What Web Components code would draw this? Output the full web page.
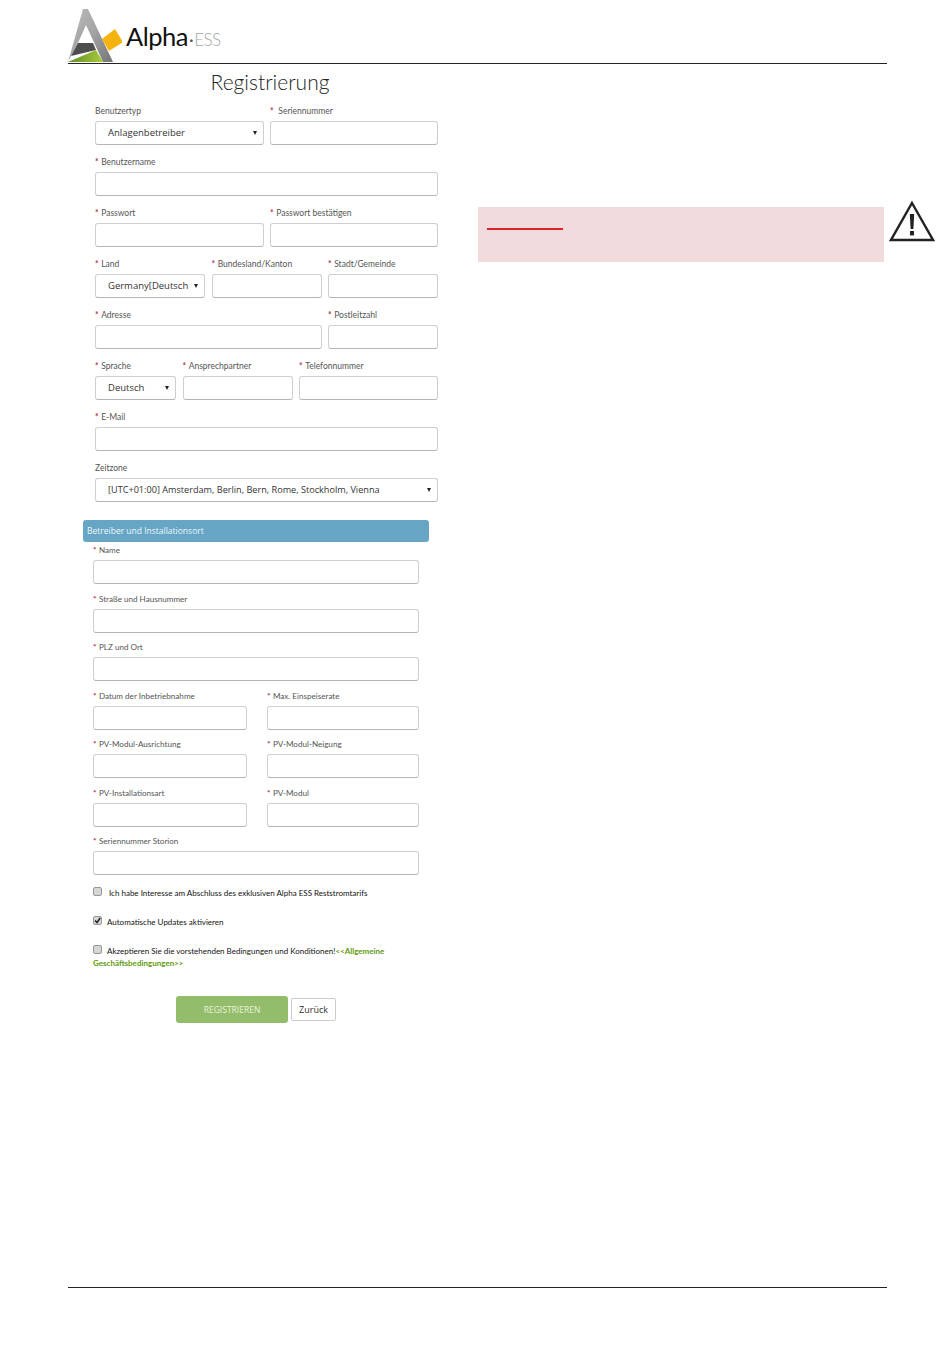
<!DOCTYPE html>
<html lang="de">
<head>
<meta charset="utf-8">
<title>Registrierung</title>
<style>
    body {
        margin: 0;
        background: #fff;
        font-family: "Open Sans", "Liberation Sans", sans-serif;
    }
</style>
</head>
<body>
<reg-page>
    <reg-header slot="header"></reg-header>
    <form-column slot="form"></form-column>
    <warn-box slot="aside"></warn-box>
</reg-page>

<script>
const pageTemplate = document.createElement('template');
pageTemplate.innerHTML = `
    <style>
        :host {
            display: flex;
            flex-flow: column nowrap;
            width: 950px;
            height: 1369px;
            padding: 8px 63px 0 68px;
            box-sizing: border-box;
        }
        .body {
            display: flex;
            flex: none;
            height: 1223px;
        }
        .foot {
            border-top: 1px solid #222;
        }
    </style>
    <slot name="header"></slot>
    <div class="body">
        <slot name="form"></slot>
        <slot name="aside"></slot>
    </div>
    <div class="foot"></div>
`;

class RegPage extends HTMLElement {
    constructor() {
        super();
        this.attachShadow({ mode: 'open' }).appendChild(pageTemplate.content.cloneNode(true));
    }
}

const headerTemplate = document.createElement('template');
headerTemplate.innerHTML = `
    <style>
        :host {
            display: flex;
            align-items: flex-end;
            height: 55px;
            border-bottom: 1px solid #222;
            box-sizing: content-box;
        }
        svg {
            display: block;
        }
        .name {
            font: 400 25.5px/1 Lato, "Open Sans", sans-serif;
            color: #111;
            margin: 0 0 14px 4px;
            letter-spacing: -0.5px;
        }
        .dot {
            color: #555;
            font-size: 18px;
            margin: 0 1px;
        }
        .ess {
            color: #a3a7a8;
            font-size: 17px;
            letter-spacing: -0.6px;
            font-weight: 300;
        }
    </style>
    <svg width="54" height="55" viewBox="0 0 54 55">
        <defs>
            <linearGradient id="arm" x1="0" y1="0" x2="1" y2="1">
                <stop offset="0" stop-color="#bcbcbc"/>
                <stop offset="0.5" stop-color="#a4a4a4"/>
                <stop offset="1" stop-color="#747474"/>
            </linearGradient>
            <linearGradient id="leaf" x1="0" y1="0" x2="1" y2="0">
                <stop offset="0" stop-color="#5f8a2a"/>
                <stop offset="1" stop-color="#a9cb3a"/>
            </linearGradient>
        </defs>
        <path d="M0 54 L15 1 L20 1 L45 54 L35 54 L18 17 L10 35 L3 48 Z" fill="url(#arm)"/>
        <path d="M3 48 L10 35 L25 35 L28 42 Z" fill="#4e4d50"/>
        <path d="M0 54 L28 42 L35 54 Z" fill="url(#leaf)"/>
        <path d="M34 31 L47 21 L55 34 L41 43 Z" fill="#f4b30e"/>
    </svg>
    <span class="name">Alpha<span class="dot">&middot;</span><span class="ess">ESS</span></span>
`;

class RegHeader extends HTMLElement {
    constructor() {
        super();
        this.attachShadow({ mode: 'open' }).appendChild(headerTemplate.content.cloneNode(true));
    }
}

const fieldTemplate = document.createElement('template');
fieldTemplate.innerHTML = `
    <style>
        :host {
            display: block;
            min-width: 0;
        }
        .label {
            display: block;
            height: 15px;
            font-family: Lato, "Open Sans", sans-serif;
            font-size: var(--label-size, 8.5px);
            line-height: 10px;
            color: #555;
            white-space: nowrap;
        }
        .star {
            color: #b4304e;
            font-weight: 700;
            margin-right: 0.5px;
        }
        .control {
            display: flex;
            align-items: center;
            height: 24px;
            box-sizing: border-box;
            border: 1px solid #cfcfcf;
            border-bottom-color: #b5b5b5;
            border-radius: 3px;
            background: #fff;
            padding: 0 6px 1px 12px;
            font-size: var(--value-size, 9.5px);
            color: #333;
            overflow: hidden;
            white-space: nowrap;
        }
        .value {
            flex: auto;
            min-width: 0;
        }
        .arrow {
            flex: none;
            margin-left: 4px;
            width: 0;
            height: 0;
            border: 2.5px solid transparent;
            border-top: 4px solid #222;
            border-bottom: 0;
        }
    </style>
    <span class="label"></span>
    <div class="control"><span class="value"></span></div>
`;

class RegField extends HTMLElement {
    constructor() {
        super();
        this.attachShadow({ mode: 'open' }).appendChild(fieldTemplate.content.cloneNode(true));
    }

    connectedCallback() {
        const root = this.shadowRoot;
        const label = root.querySelector('.label');
        label.textContent = '';
        if (this.hasAttribute('required')) {
            const star = document.createElement('span');
            star.className = 'star';
            star.textContent = '* ';
            label.appendChild(star);
        }
        label.append(this.getAttribute('label') || '');
        root.querySelector('.value').textContent = this.getAttribute('value') || '';

        // Selects carry the little arrow on the right
        if (this.hasAttribute('select') && !root.querySelector('.arrow')) {
            const arrow = document.createElement('span');
            arrow.className = 'arrow';
            root.querySelector('.control').appendChild(arrow);
        }
    }
}

const rowTemplate = document.createElement('template');
rowTemplate.innerHTML = `
    <style>
        :host {
            display: grid;
            grid-template-columns: var(--cols, 1fr);
            column-gap: var(--gap, 6px);
            margin-bottom: var(--row-space, 12px);
        }
    </style>
    <slot></slot>
`;

class RegRow extends HTMLElement {
    constructor() {
        super();
        this.attachShadow({ mode: 'open' }).appendChild(rowTemplate.content.cloneNode(true));
    }

    connectedCallback() {
        if (this.hasAttribute('cols')) {
            this.style.setProperty('--cols', this.getAttribute('cols'));
        }
    }
}

const checkTemplate = document.createElement('template');
checkTemplate.innerHTML = `
    <style>
        :host {
            display: block;
            font-family: Lato, "Open Sans", sans-serif;
            font-size: 8px;
            line-height: 12px;
            color: #111;
            margin-bottom: var(--check-space, 17px);
        }
        .box {
            display: inline-block;
            width: 9px;
            height: 9px;
            box-sizing: border-box;
            border: 1px solid #999;
            border-radius: 2px;
            background: #d6d6d6;
            margin-right: var(--check-text, 5px);
            position: relative;
            top: -2px;
            vertical-align: middle;
        }
        svg {
            display: none;
            width: 7px;
            height: 7px;
        }
        :host([checked]) svg {
            display: block;
        }
        ::slotted(a) {
            color: #5f9a10;
            font-weight: 700;
            text-decoration: none;
        }
    </style>
    <span class="box"><svg viewBox="0 0 7 7"><path d="M1 3.5 L3 5.5 L6.2 1" fill="none" stroke="#222" stroke-width="1.5"/></svg></span><slot></slot>
`;

class RegCheck extends HTMLElement {
    constructor() {
        super();
        this.attachShadow({ mode: 'open' }).appendChild(checkTemplate.content.cloneNode(true));
    }
}

const columnTemplate = document.createElement('template');
columnTemplate.innerHTML = `
    <style>
        :host {
            display: block;
            width: 410px;
            flex: none;
        }
        h1 {
            margin: 5px 0 0;
            height: 25px;
            text-align: center;
            padding-right: 6px;
            font: 300 21px/25px Lato, "Open Sans", sans-serif;
            color: #222;
        }
        .top {
            padding: 12px 40px 0 27px;
            width: 343px;
        }
        .bar {
            margin: 18px 0 0 15px;
            width: 346px;
            height: 22px;
            box-sizing: border-box;
            background: #66a5c4;
            border-radius: 3px;
            color: #eef6fa;
            font-size: 8.5px;
            line-height: 22px;
            padding-left: 4px;
        }
        .lower {
            padding: 3px 0 0 25px;
            width: 326px;
            --row-space: 9.5px;
            --gap: 20px;
            --label-size: 8.1px;
        }
        .checks {
            padding: 2px 0 0 25px;
            width: 326px;
        }
        .actions {
            display: flex;
            align-items: center;
            gap: 3px;
            margin: 27px 0 0 108px;
        }
        .primary {
            width: 112px;
            height: 27px;
            background: #94bd6b;
            border-radius: 3px;
            color: #e8f2dc;
            font-size: 8.5px;
            line-height: 27px;
            text-align: center;
        }
        .back {
            width: 45px;
            height: 23px;
            box-sizing: border-box;
            border: 1px solid #ccc;
            border-radius: 2px;
            color: #333;
            font-size: 9px;
            line-height: 21px;
            text-align: center;
        }
    </style>
    <h1>Registrierung</h1>
    <div class="top">
        <reg-row cols="169px 168px">
            <reg-field label="Benutzertyp" select value="Anlagenbetreiber"></reg-field>
            <reg-field label="&nbsp;Seriennummer" required></reg-field>
        </reg-row>
        <reg-row>
            <reg-field label="Benutzername" required></reg-field>
        </reg-row>
        <reg-row cols="169px 168px">
            <reg-field label="Passwort" required></reg-field>
            <reg-field label="Passwort bestätigen" required></reg-field>
        </reg-row>
        <reg-row cols="110px 110px 110px" style="--gap: 6.5px">
            <reg-field label="Land" required select value="Germany[Deutsch"></reg-field>
            <reg-field label="Bundesland/Kanton" required></reg-field>
            <reg-field label="Stadt/Gemeinde" required></reg-field>
        </reg-row>
        <reg-row cols="227px 110px">
            <reg-field label="Adresse" required></reg-field>
            <reg-field label="Postleitzahl" required></reg-field>
        </reg-row>
        <reg-row cols="81px 110px 139px" style="--gap: 6.5px">
            <reg-field label="Sprache" required select value="Deutsch"></reg-field>
            <reg-field label="Ansprechpartner" required></reg-field>
            <reg-field label="Telefonnummer" required></reg-field>
        </reg-row>
        <reg-row>
            <reg-field label="E-Mail" required></reg-field>
        </reg-row>
        <reg-row style="--value-size: 9.15px">
            <reg-field label="Zeitzone" select value="[UTC+01:00] Amsterdam, Berlin, Bern, Rome, Stockholm, Vienna"></reg-field>
        </reg-row>
    </div>
    <div class="bar">Betreiber und Installationsort</div>
    <div class="lower">
        <reg-row>
            <reg-field label="Name" required></reg-field>
        </reg-row>
        <reg-row>
            <reg-field label="Straße und Hausnummer" required></reg-field>
        </reg-row>
        <reg-row>
            <reg-field label="PLZ und Ort" required></reg-field>
        </reg-row>
        <reg-row cols="154px 152px">
            <reg-field label="Datum der Inbetriebnahme" required></reg-field>
            <reg-field label="Max. Einspeiserate" required></reg-field>
        </reg-row>
        <reg-row cols="154px 152px">
            <reg-field label="PV-Modul-Ausrichtung" required></reg-field>
            <reg-field label="PV-Modul-Neigung" required></reg-field>
        </reg-row>
        <reg-row cols="154px 152px">
            <reg-field label="PV-Installationsart" required></reg-field>
            <reg-field label="PV-Modul" required></reg-field>
        </reg-row>
        <reg-row>
            <reg-field label="Seriennummer Storion" required></reg-field>
        </reg-row>
    </div>
    <div class="checks">
        <reg-check style="--check-text: 7px">Ich habe Interesse am Abschluss des exklusiven Alpha ESS Reststromtarifs</reg-check>
        <reg-check checked>Automatische Updates aktivieren</reg-check>
        <reg-check>Akzeptieren Sie die vorstehenden Bedingungen und Konditionen!<a href="#">&lt;&lt;Allgemeine</a><br><a href="#">Geschäftsbedingungen&gt;&gt;</a></reg-check>
    </div>
    <div class="actions">
        <div class="primary">REGISTRIEREN</div>
        <div class="back">Zurück</div>
    </div>
`;

class FormColumn extends HTMLElement {
    constructor() {
        super();
        this.attachShadow({ mode: 'open' }).appendChild(columnTemplate.content.cloneNode(true));
    }
}

const warnTemplate = document.createElement('template');
warnTemplate.innerHTML = `
    <style>
        :host {
            display: flex;
            align-items: flex-start;
            margin-top: 143px;
            gap: 5px;
        }
        .box {
            width: 406px;
            height: 55px;
            background: #f2dbdc;
            box-sizing: border-box;
            padding: 21px 0 0 9px;
        }
        .rule {
            width: 76px;
            height: 2px;
            background: #d8232a;
        }
        svg {
            display: block;
            margin-top: -7px;
        }
    </style>
    <div class="box"><div class="rule"></div></div>
    <svg width="46" height="43" viewBox="0 0 46 43">
        <path d="M23 3 L44 40 H2 Z" fill="none" stroke="#222" stroke-width="2.4" stroke-linejoin="miter"/>
        <path d="M20.8 14 H25.2 L24.4 29 H21.6 Z" fill="#222"/>
        <rect x="21" y="31" width="4" height="4.4" fill="#222"/>
    </svg>
`;

class WarnBox extends HTMLElement {
    constructor() {
        super();
        this.attachShadow({ mode: 'open' }).appendChild(warnTemplate.content.cloneNode(true));
    }
}

customElements.define('reg-field', RegField);
customElements.define('reg-row', RegRow);
customElements.define('reg-check', RegCheck);
customElements.define('reg-header', RegHeader);
customElements.define('form-column', FormColumn);
customElements.define('warn-box', WarnBox);
customElements.define('reg-page', RegPage);
</script>
</body>
</html>
